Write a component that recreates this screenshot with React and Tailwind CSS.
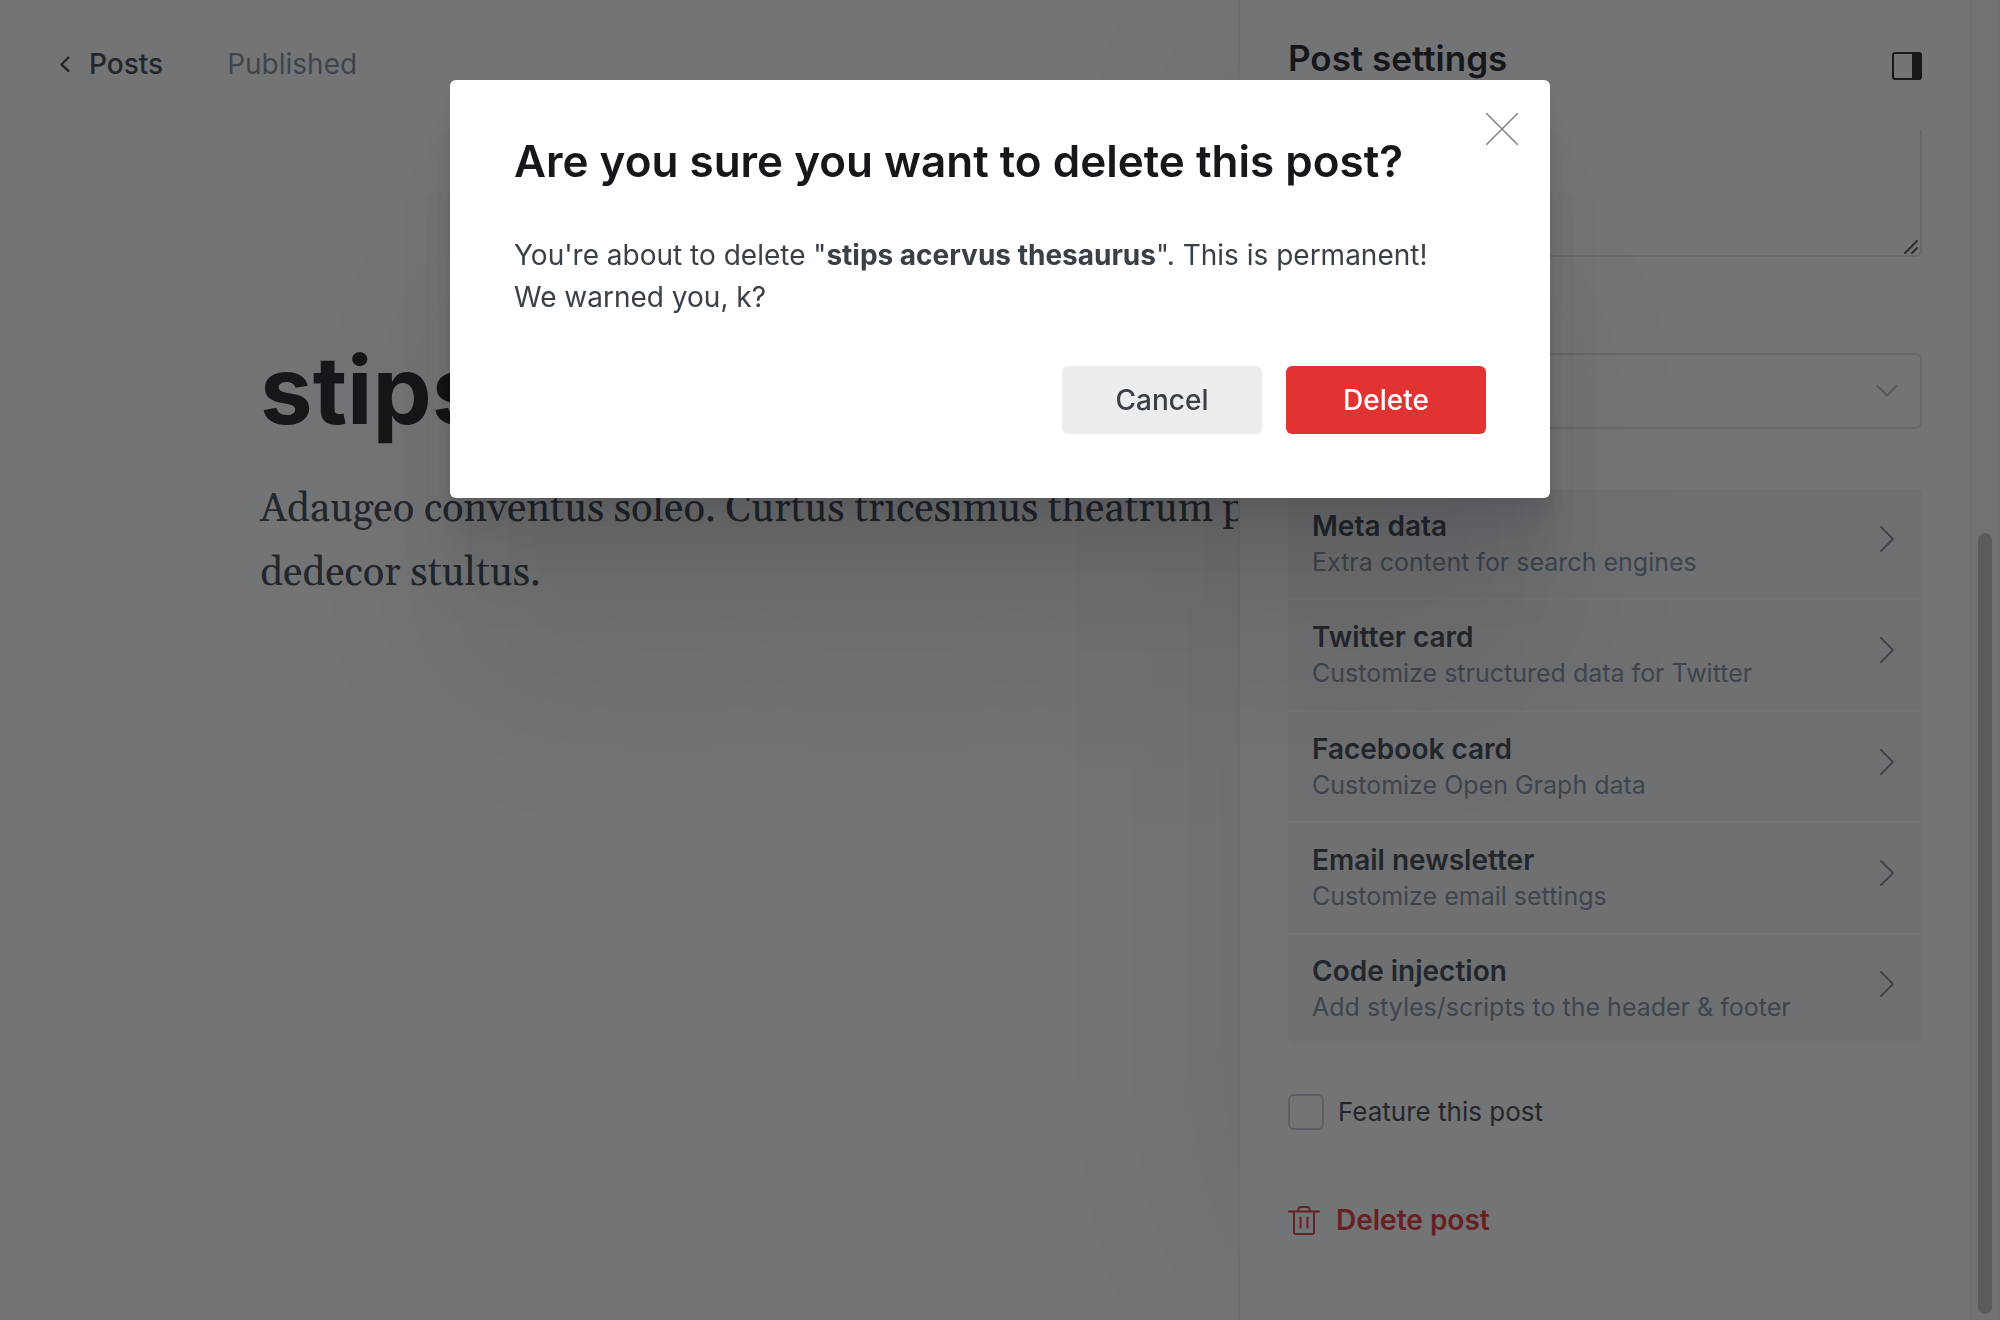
const cards = [
  { title: "Meta data", text: "Extra content for search engines" },
  { title: "Twitter card", text: "Customize structured data for Twitter" },
  { title: "Facebook card", text: "Customize Open Graph data" },
  { title: "Email newsletter", text: "Customize email settings" },
  { title: "Code injection", text: "Add styles/scripts to the header & footer" },
];

function Stroke({ className, viewBox, d, width = 2 }) {
  return (
    <svg className={className} viewBox={viewBox} fill="none" stroke="currentColor" strokeWidth={width} strokeLinecap="round" strokeLinejoin="round" aria-hidden="true">
      <path d={d} />
    </svg>
  );
}

function Editor() {
  return (
    <main className="min-w-0 flex-1 overflow-hidden">
      <header className="flex h-32 items-center gap-16 pl-[60px] text-[28px] leading-9">
        <a href="#posts" className="flex items-center gap-[19px] font-medium text-[#394047]">
          <Stroke className="h-4 w-[10px]" viewBox="0 0 10 16" width={2.4} d="M8.5 1.5L1.5 8.5L8.5 15" />
          Posts
        </a>
        <span className="text-[#7c8b9a]">Published</span>
      </header>
      <article className="pt-[198px] pl-[260px] whitespace-nowrap">
        <h1 className="text-[94px] leading-[128px] font-bold text-[#15171a]">stips acervus thesaurus</h1>
        <p className="mt-6 font-[Georgia,Gelasio,'Liberation_Serif',serif] text-[40px] leading-[64px] text-[#394047]">
          Adaugeo conventus soleo. Curtus tricesimus theatrum p<br />
          dedecor stultus.
        </p>
      </article>
    </main>
  );
}

function Settings() {
  return (
    <aside className="flex w-[762px] shrink-0 border-l-2 border-[#e9ebed] bg-white shadow-[0_0_240px_rgba(0,0,0,0.08)]">
      <div className="min-w-0 flex-1 px-12">
        <div className="flex h-[130px] items-start justify-between pt-9">
          <h2 className="text-[35px] leading-[44px] font-semibold text-[#15171a]">Post settings</h2>
          <button type="button" aria-label="Toggle settings" className="mt-4 text-[#15171a]">
            <svg className="h-7 w-[30px]" viewBox="0 0 30 28" fill="none" aria-hidden="true">
              <rect x="1" y="1" width="28" height="26" rx="2" stroke="currentColor" strokeWidth="2" />
              <path d="M20 1h8a1 1 0 0 1 1 1v24a1 1 0 0 1-1 1h-8z" fill="currentColor" />
            </svg>
          </button>
        </div>
        <div className="grid h-[223px] grid-rows-[127px]">
          <textarea aria-label="Excerpt" className="col-start-1 row-start-1 block w-full resize-none rounded-b-md border-2 border-t-0 border-[#dde1e5]" />
          <Stroke className="col-start-1 row-start-1 mr-1 mb-[3px] size-[14px] self-end justify-self-end text-[#4a4c4f]" viewBox="0 0 14 14" d="M1 13L13 1M8 13L13 8" />
        </div>
        <div className="grid items-center">
          <select aria-label="Author" className="col-start-1 row-start-1 h-[76px] w-full appearance-none rounded-md border-2 border-[#dde1e5] bg-transparent" />
          <Stroke className="col-start-1 row-start-1 mr-6 h-3 w-[22px] justify-self-end text-[#aeb7c1]" viewBox="0 0 22 12" d="M1.500 1L11 10.500L20.500 1" />
        </div>
        <ul className="mt-[60px] flex h-[555px] flex-col gap-[2px] overflow-hidden rounded-md">
          {cards.map((c) => (
            <li key={c.title} className="flex flex-1">
              <button type="button" className="flex w-full items-center justify-between bg-[#f4f4f5] pr-7 pl-6 text-left">
                <span>
                  <span className="block text-[28px] leading-9 font-semibold text-[#394047]">{c.title}</span>
                  <span className="block text-[25px] leading-9 text-[#7c8b9a]">{c.text}</span>
                </span>
                <Stroke className="mb-[10px] h-[26px] w-[14px] text-[#7c8b9a]" viewBox="0 0 14 26" d="M1 1L13 13L1 25" />
              </button>
            </li>
          ))}
        </ul>
        <label className="mt-[50px] flex items-center gap-[14px] text-[26px] leading-9 text-[#394047]">
          <input type="checkbox" className="size-9 appearance-none rounded-md border-2 border-[#c5cdd5]" />
          Feature this post
        </label>
        <button type="button" className="mt-[72px] flex items-center gap-4 text-[28px] leading-9 font-semibold text-[#e23131]">
          <svg className="size-8" viewBox="0 0 32 32" fill="none" stroke="currentColor" strokeWidth="2" strokeLinecap="round" strokeLinejoin="round" aria-hidden="true">
            <path d="M1 7.500h30M6 7.500v20.500a2 2 0 0 0 2 2h16a2 2 0 0 0 2-2V7.500M10 7.500l.6-3a2 2 0 0 1 2-1.500h6.800a2 2 0 0 1 2 1.500l.6 3M12.500 13.500v10M19.500 13.500v10" />
          </svg>
          Delete post
        </button>
      </div>
      <div className="flex w-[30px] flex-col border-x-2 border-[#eceef0] bg-[#fafafa] px-[6px] pt-[533px] pb-[6px]">
        <div className="flex-1 rounded-full bg-[#c1c1c1]" />
      </div>
    </aside>
  );
}

function DeleteDialog() {
  return (
    <div className="fixed inset-0 flex items-start justify-center bg-[#15171a]/60 pt-20">
      <section role="dialog" aria-modal="true" aria-labelledby="dialog-title" className="relative w-full max-w-[1100px] rounded-md bg-white px-16 pt-[53px] pb-16 shadow-[0_6px_4px_rgba(0,0,0,0.02),0_13px_11px_rgba(0,0,0,0.028),0_25px_20px_rgba(0,0,0,0.035),0_45px_36px_rgba(0,0,0,0.042),0_84px_67px_rgba(0,0,0,0.05),0_200px_160px_rgba(0,0,0,0.07)]">
        <button type="button" aria-label="Close" className="absolute top-[33px] right-8 text-[#7f8386]">
          <Stroke className="size-8" viewBox="0 0 32 32" width={1.5} d="M0.500 0.500L31.500 31.500M31.500 0.500L0.500 31.500" />
        </button>
        <h2 id="dialog-title" className="text-[44px] leading-[56px] font-semibold text-[#15171a]">Are you sure you want to delete this post?</h2>
        <p className="mt-[45px] text-[28px] leading-[42px] text-[#394047]">
          You're about to delete "<strong className="font-bold">stips acervus thesaurus</strong>". This is permanent!<br />
          We warned you, k?
        </p>
        <div className="mt-12 flex justify-end gap-6 text-[28px] leading-9">
          <button type="button" className="h-[68px] w-[200px] rounded-md bg-[#ebedef] font-medium text-[#394047]">Cancel</button>
          <button type="button" className="h-[68px] w-[200px] rounded-md bg-[#e23333] font-medium text-white">Delete</button>
        </div>
      </section>
    </div>
  );
}

export default function App() {
  return (
    <div className="flex h-screen overflow-hidden bg-white font-[Inter,sans-serif]">
      <Editor />
      <Settings />
      <DeleteDialog />
    </div>
  );
}
